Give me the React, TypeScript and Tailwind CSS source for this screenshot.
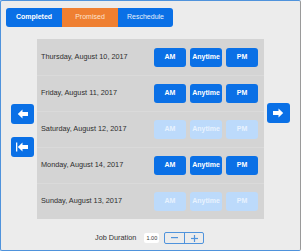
import React from "react";

type Day = { label: string; enabled: boolean };

const days: Day[] = [
  { label: "Thursday, August 10, 2017", enabled: true },
  { label: "Friday, August 11, 2017", enabled: true },
  { label: "Saturday, August 12, 2017", enabled: false },
  { label: "Monday, August 14, 2017", enabled: true },
  { label: "Sunday, August 13, 2017", enabled: false },
];

const slots = ["AM", "Anytime", "PM"];

function Arrow({ dir, bar }: { dir: "left" | "right"; bar?: boolean }) {
  return (
    <button className="flex h-[20px] w-[23px] items-center justify-center rounded-[3px] bg-[#0a70e6]">
      <svg width="13" height="10" viewBox="0 0 13 10" className={dir === "right" ? "rotate-180" : ""}>
        {bar && <rect x="0" y="0.5" width="1.3" height="9" fill="#fff" />}
        <polygon points="1.8,5 6.5,0.5 6.5,3 12,3 12,7 6.5,7 6.5,9.5" fill="#fff" />
      </svg>
    </button>
  );
}

export default function App() {
  return (
    <div className="h-[252px] w-[302px] bg-white font-['Liberation_Sans',Arial,sans-serif]">
      <div className="flex h-[251px] w-[301px] flex-col rounded-[2px] border border-[#4f93dc] border-r-[#9a9a9a] bg-[#ececec]">
        {/* segmented control */}
        <div className="ml-[5px] mt-[7px] flex h-[19px] w-[167px] overflow-hidden rounded-[3px] text-[7px]">
          <div className="flex w-[56px] items-center justify-center bg-[#0a70e6] font-bold text-white">Completed</div>
          <div className="flex w-[56px] items-center justify-center bg-[#ef7f31] text-[#fde3cf]">Promised</div>
          <div className="flex w-[55px] items-center justify-center bg-[#0a70e6] text-[#e6f0fc]">Reschedule</div>
        </div>

        <div className="mt-[12px] flex">
          <div className="flex w-[36px] flex-col gap-[13px] pl-[10px] pt-[65px]">
            <Arrow dir="left" />
            <Arrow dir="left" bar />
          </div>

          <div className="flex h-[180px] w-[227px] flex-col bg-[#d4d4d4]">
            {days.map((d, i) => (
              <div
                key={d.label}
                className={`flex h-[36px] items-center pl-[4px] pr-[6px] ${i > 0 ? "border-t border-[#dadada]" : ""}`}
              >
                <span className="flex-1 text-[7.3px] text-[#2e2e2e]">{d.label}</span>
                <div className="flex gap-[4px]">
                  {slots.map((s) => (
                    <div
                      key={s}
                      className={`flex h-[19px] w-[32px] items-center justify-center rounded-[3px] text-[7px] font-bold ${
                        d.enabled ? "bg-[#0a70e6] text-white" : "bg-[#bcdafb] text-[#e8f2fe]"
                      }`}
                    >
                      {s}
                    </div>
                  ))}
                </div>
              </div>
            ))}
          </div>

          <div className="pl-[3px] pt-[64px]">
            <Arrow dir="right" />
          </div>
        </div>

        <div className="mt-[13px] flex items-center pl-[94px]">
          <span className="text-[7.3px] text-[#333]">Job Duration</span>
          <div className="ml-[8px] flex h-[10px] w-[15px] items-center justify-center rounded-[2px] bg-white text-[5.5px] text-[#333]">
            1.00
          </div>
          <div className="ml-[5px] flex h-[12px] w-[40px] rounded-[2px] border border-[#4f93dc] text-[#4f93dc]">
            <div className="flex flex-1 items-center justify-center border-r border-[#4f93dc]">
              <svg width="7" height="2" viewBox="0 0 7 2">
                <rect width="7" height="1.2" fill="#4f93dc" />
              </svg>
            </div>
            <div className="flex flex-1 items-center justify-center">
              <svg width="7" height="7" viewBox="0 0 7 7">
                <rect y="2.9" width="7" height="1.2" fill="#4f93dc" />
                <rect x="2.9" width="1.2" height="7" fill="#4f93dc" />
              </svg>
            </div>
          </div>
        </div>
      </div>
    </div>
  );
}
